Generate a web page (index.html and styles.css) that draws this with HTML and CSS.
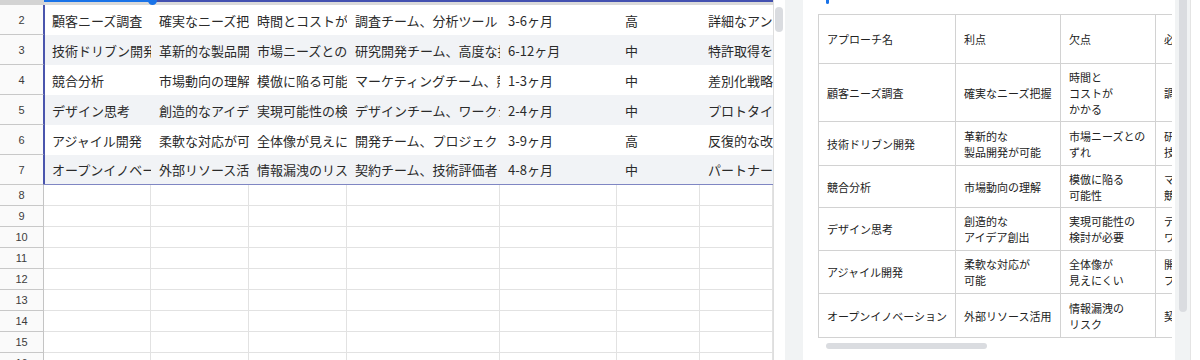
FILE: index.html
```html
<!DOCTYPE html>
<html lang="ja">
<head>
<meta charset="utf-8">
<link rel="stylesheet" href="styles.css">
</head>
<body>
<div class="sheet">
  <div class="grid">
    <div class="topstrip">
      <div class="ts-head"></div>
      <div class="ts-main"><div class="ts-hl"></div><div class="ts-dot"></div></div>
    </div>
    <div class="row sel"><div class="rh">2</div><div class="c">顧客ニーズ調査</div><div class="c">確実なニーズ把握</div><div class="c">時間とコストがかかる</div><div class="c">調査チーム、分析ツール</div><div class="c">3-6ヶ月</div><div class="c">高</div><div class="c">詳細なアンケート調査</div></div>
    <div class="row sel band"><div class="rh">3</div><div class="c">技術ドリブン開発</div><div class="c">革新的な製品開発が可能</div><div class="c">市場ニーズとのずれ</div><div class="c">研究開発チーム、高度な技術者</div><div class="c">6-12ヶ月</div><div class="c">中</div><div class="c">特許取得を目指す</div></div>
    <div class="row sel"><div class="rh">4</div><div class="c">競合分析</div><div class="c">市場動向の理解</div><div class="c">模倣に陥る可能性</div><div class="c">マーケティングチーム、競合情報</div><div class="c">1-3ヶ月</div><div class="c">中</div><div class="c">差別化戦略の策定</div></div>
    <div class="row sel band"><div class="rh">5</div><div class="c">デザイン思考</div><div class="c">創造的なアイデア創出</div><div class="c">実現可能性の検討が必要</div><div class="c">デザインチーム、ワークショップ</div><div class="c">2-4ヶ月</div><div class="c">中</div><div class="c">プロトタイプ作成</div></div>
    <div class="row sel"><div class="rh">6</div><div class="c">アジャイル開発</div><div class="c">柔軟な対応が可能</div><div class="c">全体像が見えにくい</div><div class="c">開発チーム、プロジェクト管理</div><div class="c">3-9ヶ月</div><div class="c">高</div><div class="c">反復的な改善</div></div>
    <div class="row sel band last"><div class="rh">7</div><div class="c">オープンイノベーション</div><div class="c">外部リソース活用</div><div class="c">情報漏洩のリスク</div><div class="c">契約チーム、技術評価者</div><div class="c">4-8ヶ月</div><div class="c">中</div><div class="c">パートナーシップ構築</div></div>
    <div class="row empty"><div class="rh">8</div><div class="c"></div><div class="c"></div><div class="c"></div><div class="c"></div><div class="c"></div><div class="c"></div><div class="c"></div></div>
    <div class="row empty"><div class="rh">9</div><div class="c"></div><div class="c"></div><div class="c"></div><div class="c"></div><div class="c"></div><div class="c"></div><div class="c"></div></div>
    <div class="row empty"><div class="rh">10</div><div class="c"></div><div class="c"></div><div class="c"></div><div class="c"></div><div class="c"></div><div class="c"></div><div class="c"></div></div>
    <div class="row empty"><div class="rh">11</div><div class="c"></div><div class="c"></div><div class="c"></div><div class="c"></div><div class="c"></div><div class="c"></div><div class="c"></div></div>
    <div class="row empty"><div class="rh">12</div><div class="c"></div><div class="c"></div><div class="c"></div><div class="c"></div><div class="c"></div><div class="c"></div><div class="c"></div></div>
    <div class="row empty"><div class="rh">13</div><div class="c"></div><div class="c"></div><div class="c"></div><div class="c"></div><div class="c"></div><div class="c"></div><div class="c"></div></div>
    <div class="row empty"><div class="rh">14</div><div class="c"></div><div class="c"></div><div class="c"></div><div class="c"></div><div class="c"></div><div class="c"></div><div class="c"></div></div>
    <div class="row empty"><div class="rh">15</div><div class="c"></div><div class="c"></div><div class="c"></div><div class="c"></div><div class="c"></div><div class="c"></div><div class="c"></div></div>
    <div class="row empty"><div class="rh">16</div><div class="c"></div><div class="c"></div><div class="c"></div><div class="c"></div><div class="c"></div><div class="c"></div><div class="c"></div></div>
  </div>
  <div class="vlane"><div class="vthumb"></div></div>
</div>
<div class="gutter"></div>
<div class="panel">
  <div class="mark"></div>
  <div class="tscroll">
    <table class="pt">
      <colgroup><col class="k1"><col class="k2"><col class="k3"><col class="k4"></colgroup>
      <tr class="h0"><td>アプローチ名</td><td>利点</td><td>欠点</td><td>必要なリソース</td></tr>
      <tr class="h1"><td>顧客ニーズ調査</td><td>確実なニーズ把握</td><td>時間と<br>コストが<br>かかる</td><td>調査チーム、分析ツール</td></tr>
      <tr class="h2"><td>技術ドリブン開発</td><td>革新的な<br>製品開発が可能</td><td>市場ニーズとの<br>ずれ</td><td>研究開発チーム、<br>技術者</td></tr>
      <tr class="h3"><td>競合分析</td><td>市場動向の理解</td><td>模倣に陥る<br>可能性</td><td>マーケティングチーム、<br>競合情報</td></tr>
      <tr class="h4"><td>デザイン思考</td><td>創造的な<br>アイデア創出</td><td>実現可能性の<br>検討が必要</td><td>デザインチーム、<br>ワークショップ</td></tr>
      <tr class="h5"><td>アジャイル開発</td><td>柔軟な対応が<br>可能</td><td>全体像が<br>見えにくい</td><td>開発チーム、<br>プロジェクト管理</td></tr>
      <tr class="h6"><td>オープンイノベーション</td><td>外部リソース活用</td><td>情報漏洩の<br>リスク</td><td>契約チーム、技術評価者</td></tr>
    </table>
  </div>
  <div class="hbar"></div>
</div>
<div class="pscroll"><div class="pthumb"></div></div>
<div class="edge"></div>
</body>
</html>
```

FILE: styles.css
```css
html, body {
  margin: 0;
  padding: 0;
}
body {
  width: 1200px;
  height: 360px;
  overflow: hidden;
  display: flex;
  background: #fff;
  font-family: "Noto Sans CJK JP", "Noto Sans", sans-serif;
  color: #222;
}

/* ---------- spreadsheet ---------- */
.sheet {
  width: 785px;
  height: 360px;
  display: flex;
  flex: none;
}
.grid {
  width: 773px;
  height: 360px;
  overflow: hidden;
  display: flex;
  flex-direction: column;
}
.topstrip {
  display: flex;
  height: 5px;
  flex: none;
}
.ts-head {
  width: 44px;
  background: #d3d3d3;
}
.ts-main {
  flex: 1;
  position: relative;
  box-sizing: border-box;
  border-top: 2px solid #4351b0;
  background: #dadada;
}
.ts-hl {
  position: absolute;
  left: 0;
  top: -2px;
  width: 108px;
  height: 2px;
  background: #1a73e8;
}
.ts-dot {
  position: absolute;
  left: 104px;
  top: -6px;
  width: 9px;
  height: 9px;
  border-radius: 50%;
  background: #1a73e8;
}
.row {
  display: flex;
  flex: none;
  height: 30px;
}
.row.empty {
  height: 21px;
}
.rh {
  width: 44px;
  flex: none;
  box-sizing: border-box;
  border-right: 1px solid #c4c4c4;
  border-bottom: 1px solid #c8c8c8;
  background: #fafafa;
  font-family: "Liberation Sans", Arial, sans-serif;
  font-size: 11px;
  color: #3c3c3c;
  display: flex;
  align-items: center;
  justify-content: center;
}
.c {
  box-sizing: border-box;
  flex: none;
  overflow: hidden;
  white-space: nowrap;
  padding-left: 8px;
  font-size: 13px;
  color: #2a2a2a;
  display: flex;
  align-items: center;
}
.c:nth-child(2) { width: 107px; }
.c:nth-child(3) { width: 98px; }
.c:nth-child(4) { width: 98px; }
.c:nth-child(5) { width: 153px; }
.c:nth-child(6) { width: 117px; }
.c:nth-child(7) { width: 83px; }
.c:nth-child(8) { width: 73px; }

.sel .rh {
  border-right-color: #4a55ad;
}
.sel .c:nth-child(2) {
  box-shadow: inset 1px 0 #4a55ad;
}
.sel.band .c {
  background: #f1f3f6;
}
.sel.last .c {
  border-bottom: 1px solid #7f86c3;
}
.empty .c {
  border-right: 1px solid #e2e2e2;
  border-bottom: 1px solid #e2e2e2;
}

.vlane {
  width: 12px;
  flex: none;
  box-sizing: border-box;
  border-left: 1px solid #dedede;
  padding: 7px 0 0 1px;
  background: #fff;
}
.vthumb {
  width: 8px;
  height: 25px;
  border-radius: 4px;
  background: #dadce0;
}

.gutter {
  width: 18px;
  flex: none;
  background: #f1f3f4;
}

/* ---------- side panel ---------- */
.panel {
  width: 372px;
  flex: none;
  box-sizing: border-box;
  padding-left: 15px;
  background: #fff;
  display: flex;
  flex-direction: column;
  overflow: hidden;
}
.mark {
  margin-left: 8px;
  width: 3px;
  height: 4px;
  background: #1a73e8;
  border-radius: 0 0 2px 2px;
  flex: none;
}
.tscroll {
  margin-top: 10px;
  width: 354px;
  overflow: hidden;
  flex: none;
}
.pt {
  border-collapse: collapse;
  table-layout: fixed;
  width: 527px;
}
.k1 { width: 137px; }
.k2 { width: 105px; }
.k3 { width: 95px; }
.k4 { width: 190px; }
.pt td {
  border: 1px solid #d2d2d2;
  padding: 0 8px;
  font-size: 11px;
  line-height: 16px;
  color: #222;
  white-space: nowrap;
  overflow: hidden;
  vertical-align: middle;
}
.h0 { height: 49px; }
.h1 { height: 58px; }
.h2 { height: 44px; }
.h3 { height: 42px; }
.h4 { height: 43px; }
.h5 { height: 43px; }
.h6 { height: 44px; }

.hbar {
  margin: 5px 0 0 8px;
  width: 161px;
  height: 6px;
  border-radius: 3px;
  background: #dadce0;
  flex: none;
}

.pscroll {
  width: 15px;
  flex: none;
  box-sizing: border-box;
  padding-left: 4px;
  background: #f1f3f4;
}
.pthumb {
  width: 8px;
  height: 312px;
  border-radius: 0 0 4px 4px;
  background: #dadce0;
}
.edge {
  width: 10px;
  flex: none;
  box-sizing: border-box;
  border-left: 1px solid #e4e4e4;
  background: #fff;
}
```
